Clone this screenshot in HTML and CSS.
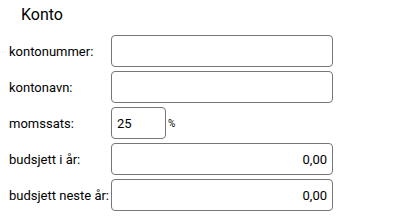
FILE: index.html
```html
<!DOCTYPE html>
<html lang="no">

<head>
    <meta charset="UTF-8">
    <meta name="viewport" content="width=device-width, initial-scale=1.0">
    <title>Konto</title>
    <link rel="stylesheet" href="styles.css">
</head>

<body>
    <div class="account-form">
        <h3 class="form-title">Konto</h3>

        <div class="form-row">
            <label class="form-label" for="kontonummer">kontonummer:</label>
            <input class="form-input" id="kontonummer" type="text">
        </div>

        <div class="form-row">
            <label class="form-label" for="kontonavn">kontonavn:</label>
            <input class="form-input" id="kontonavn" type="text">
        </div>

        <div class="form-row">
            <label class="form-label" for="momssats">momssats:</label>
            <input class="form-input short" id="momssats" type="text" value="25">
            <span class="unit">%</span>
        </div>

        <div class="form-row">
            <label class="form-label" for="budsjett">budsjett i år:</label>
            <input class="form-input amount" id="budsjett" type="text" value="0,00">
        </div>

        <div class="form-row">
            <label class="form-label" for="budsjett-neste">budsjett neste år:</label>
            <input class="form-input amount" id="budsjett-neste" type="text" value="0,00">
        </div>
    </div>
</body>

</html>
```

FILE: styles.css
```css
body {
    font-family: Roboto, "Liberation Sans", Arial, sans-serif;
    margin: 0;
    background-color: #ffffff;
    color: #000000;
}

.account-form {
    display: flex;
    flex-direction: column;
    gap: 4px;
    padding: 5px 0 0 9px;
}

.form-title {
    font-size: 16px;
    font-weight: normal;
    margin: 0 0 6px 12px;
    line-height: 20px;
}

.form-row {
    display: flex;
    align-items: center;
    height: 32px;
}

.form-label {
    width: 102px;
    flex-shrink: 0;
    font-size: 13px;
    white-space: nowrap;
}

.form-input {
    box-sizing: border-box;
    width: 222px;
    height: 32px;
    border: 1px solid #767676;
    border-radius: 4px;
    padding: 0 5px;
    font-family: inherit;
    font-size: 13px;
    color: #000000;
    background: #ffffff;
}

/* momssats-feltet er kortere */
.form-input.short {
    width: 55px;
}

.form-input.amount {
    text-align: right;
}

.unit {
    font-size: 10px;
    margin-left: 2px;
}
```
